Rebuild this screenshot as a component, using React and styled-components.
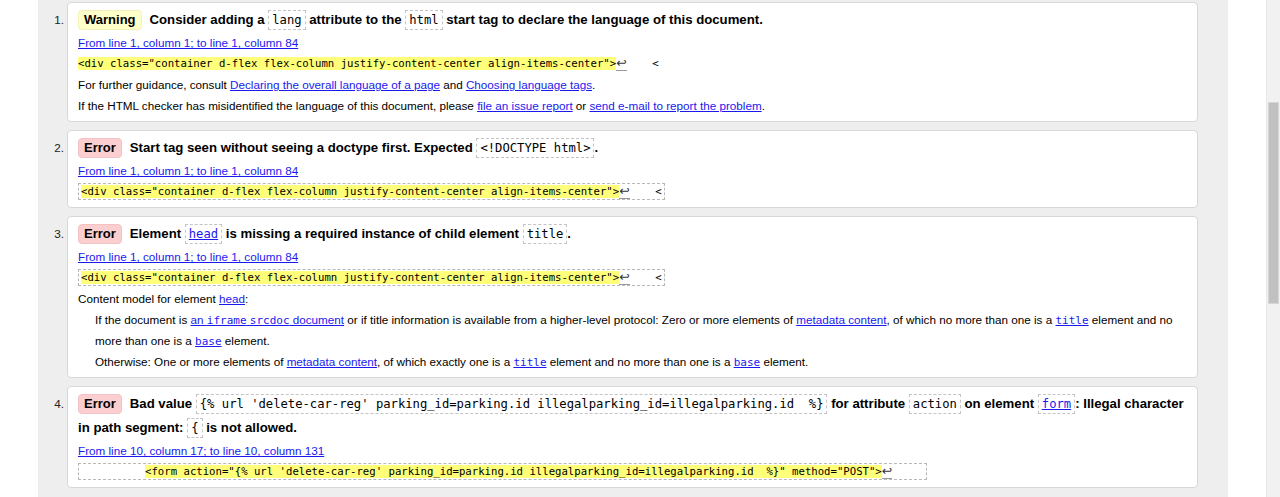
import styled, { createGlobalStyle } from "styled-components";

const GlobalStyle = createGlobalStyle`
  html, body {
    margin: 0;
    padding: 0;
    height: 497px;
    overflow: hidden;
    background: #fff;
  }
  #root {
    height: 497px;
  }
`;

const Page = styled.div`
  display: flex;
  height: 497px;
  font-family: "Liberation Sans", Arial, sans-serif;
  color: #000;
`;

const LeftGap = styled.div`
  width: 38px;
  flex: none;
`;

const Main = styled.main`
  width: 1190px;
  flex: none;
  background: #eeeeee;
  padding-top: 2px;
  box-sizing: border-box;
  overflow: hidden;
`;

const RightGap = styled.div`
  width: 38px;
  flex: none;
`;

const Scrollbar = styled.div`
  width: 14px;
  flex: none;
  background: #f1f1f1;
  border-left: 1px solid #e8e8e8;
  box-sizing: border-box;
  padding-top: 102px;
`;

const Thumb = styled.div`
  height: 202px;
  margin: 0 1px 0 1px;
  background: #c1c1c1;
  border: 1px solid #d6d6d6;
  box-sizing: border-box;
`;

const List = styled.div`
  display: flex;
  flex-direction: column;
  gap: 8px;
`;

const Item = styled.div`
  display: flex;
  align-items: flex-start;
`;

const Num = styled.div`
  width: 26px;
  flex: none;
  text-align: right;
  padding-right: 3px;
  font-size: 11.7px;
  line-height: 24px;
  padding-top: 6px;
  color: #222;
`;

const Card = styled.div`
  width: 1131px;
  box-sizing: border-box;
  background: #fff;
  border: 1px solid #d8d8d8;
  border-radius: 4px;
  padding: 5px 8px 5px 10px;
`;

const Title = styled.div`
  font-weight: bold;
  font-size: 13.2px;
  line-height: 24px;
`;

const Badge = styled.span`
  display: inline-block;
  padding: 0 5px;
  margin-right: 8px;
  line-height: 18px;
  font-size: 13px;
  border-radius: 4px;
  background: ${(p) => (p.$kind === "error" ? "#fbcfcf" : "#ffffc9")};
  border: 1px solid ${(p) => (p.$kind === "error" ? "#f4c2c2" : "#f3f0b8")};
`;

const Code = styled.code`
  display: inline-block;
  white-space: pre;
  font-family: "DejaVu Sans Mono", "Liberation Mono", monospace;
  font-weight: normal;
  font-size: 12.2px;
  line-height: 18px;
  padding: 0 3px;
  border: 1px dashed #c4c4c4;
`;

const Line = styled.div`
  font-size: 11.7px;
  line-height: 21px;
  padding-left: ${(p) => p.$indent || 0}px;
`;

const A = styled.a`
  color: #1a1aee;
  text-decoration: underline;
`;

const Mono = styled.code`
  font-family: "DejaVu Sans Mono", "Liberation Mono", monospace;
  font-size: 11px;
  line-height: 1;
`;

const ExtractRow = styled.div`
  line-height: 21px;
  height: 21px;
  display: flex;
  align-items: center;
`;

const Extract = styled.div`
  display: inline-block;
  white-space: pre;
  font-family: "DejaVu Sans Mono", "Liberation Mono", monospace;
  font-size: 10.65px;
  line-height: 15px;
  padding: 0 2px;
  border: 1px dashed ${(p) => (p.$boxed ? "#b8b8b8" : "transparent")};
  margin-left: ${(p) => (p.$boxed ? 0 : -3)}px;
`;

const Hl = styled.span`
  background: #ffff7a;
`;

const Lf = styled.span`
  font-family: "DejaVu Sans", sans-serif;
  font-size: 12.5px;
  line-height: 1;
  border-bottom: 1px solid #999;
  color: #333;
`;

const extract1 =
  '<div class="container d-flex flex-column justify-content-center align-items-center">';
const extract4 =
  "<form action=\"{% url 'delete-car-reg' parking_id=parking.id illegalparking_id=illegalparking.id  %}\" method=\"POST\">";

function Location({ text }) {
  return (
    <Line>
      <A href="#">{text}</A>
    </Line>
  );
}

function Snippet({ boxed, lead = "", code, tail = "" }) {
  return (
    <ExtractRow>
      <Extract $boxed={boxed}>
        {lead}
        <Hl>{code}</Hl>
        <Lf>↩</Lf>
        {tail}
      </Extract>
    </ExtractRow>
  );
}

export default function App() {
  return (
    <>
      <GlobalStyle />
      <Page>
        <LeftGap />
        <Main>
          <List>
            <Item>
              <Num>1.</Num>
              <Card>
                <Title>
                  <Badge>Warning</Badge>
                  Consider adding a <Code>lang</Code> attribute to the{" "}
                  <Code>html</Code> start tag to declare the language of this document.
                </Title>
                <Location text="From line 1, column 1; to line 1, column 84" />
                <Snippet code={extract1} tail={"    <"} />
                <Line>
                  For further guidance, consult{" "}
                  <A href="#">Declaring the overall language of a page</A> and{" "}
                  <A href="#">Choosing language tags</A>.
                </Line>
                <Line>
                  If the HTML checker has misidentified the language of this document, please{" "}
                  <A href="#">file an issue report</A> or{" "}
                  <A href="#">send e-mail to report the problem</A>.
                </Line>
              </Card>
            </Item>

            <Item>
              <Num>2.</Num>
              <Card>
                <Title>
                  <Badge $kind="error">Error</Badge>
                  Start tag seen without seeing a doctype first. Expected{" "}
                  <Code>&lt;!DOCTYPE html&gt;</Code>.
                </Title>
                <Location text="From line 1, column 1; to line 1, column 84" />
                <Snippet boxed code={extract1} tail={"    <"} />
              </Card>
            </Item>

            <Item>
              <Num>3.</Num>
              <Card>
                <Title>
                  <Badge $kind="error">Error</Badge>
                  Element{" "}
                  <Code>
                    <A href="#">head</A>
                  </Code>{" "}
                  is missing a required instance of child element <Code>title</Code>.
                </Title>
                <Location text="From line 1, column 1; to line 1, column 84" />
                <Snippet boxed code={extract1} tail={"    <"} />
                <Line>
                  Content model for element <A href="#">head</A>:
                </Line>
                <Line $indent={17}>
                  If the document is{" "}
                  <A href="#">
                    an <Mono>iframe</Mono> <Mono>srcdoc</Mono> document
                  </A>{" "}
                  or if title information is available from a higher-level protocol: Zero or
                  more elements of <A href="#">metadata content</A>, of which no more than one
                  is a{" "}
                  <A href="#">
                    <Mono>title</Mono>
                  </A>{" "}
                  element and no more than one is a{" "}
                  <A href="#">
                    <Mono>base</Mono>
                  </A>{" "}
                  element.
                </Line>
                <Line $indent={17}>
                  Otherwise: One or more elements of <A href="#">metadata content</A>, of which
                  exactly one is a{" "}
                  <A href="#">
                    <Mono>title</Mono>
                  </A>{" "}
                  element and no more than one is a{" "}
                  <A href="#">
                    <Mono>base</Mono>
                  </A>{" "}
                  element.
                </Line>
              </Card>
            </Item>

            <Item>
              <Num>4.</Num>
              <Card>
                <Title>
                  <Badge $kind="error">Error</Badge>
                  Bad value{" "}
                  <Code>
                    {"{% url 'delete-car-reg' parking_id=parking.id illegalparking_id=illegalparking.id  %}"}
                  </Code>{" "}
                  for attribute <Code>action</Code> on element{" "}
                  <Code>
                    <A href="#">form</A>
                  </Code>
                  : Illegal character in path segment: <Code>{"{"}</Code> is not allowed.
                </Title>
                <Location text="From line 10, column 17; to line 10, column 131" />
                <Snippet boxed lead={"          "} code={extract4} tail={"     "} />
              </Card>
            </Item>
          </List>
        </Main>
        <RightGap />
        <Scrollbar>
          <Thumb />
        </Scrollbar>
      </Page>
    </>
  );
}
